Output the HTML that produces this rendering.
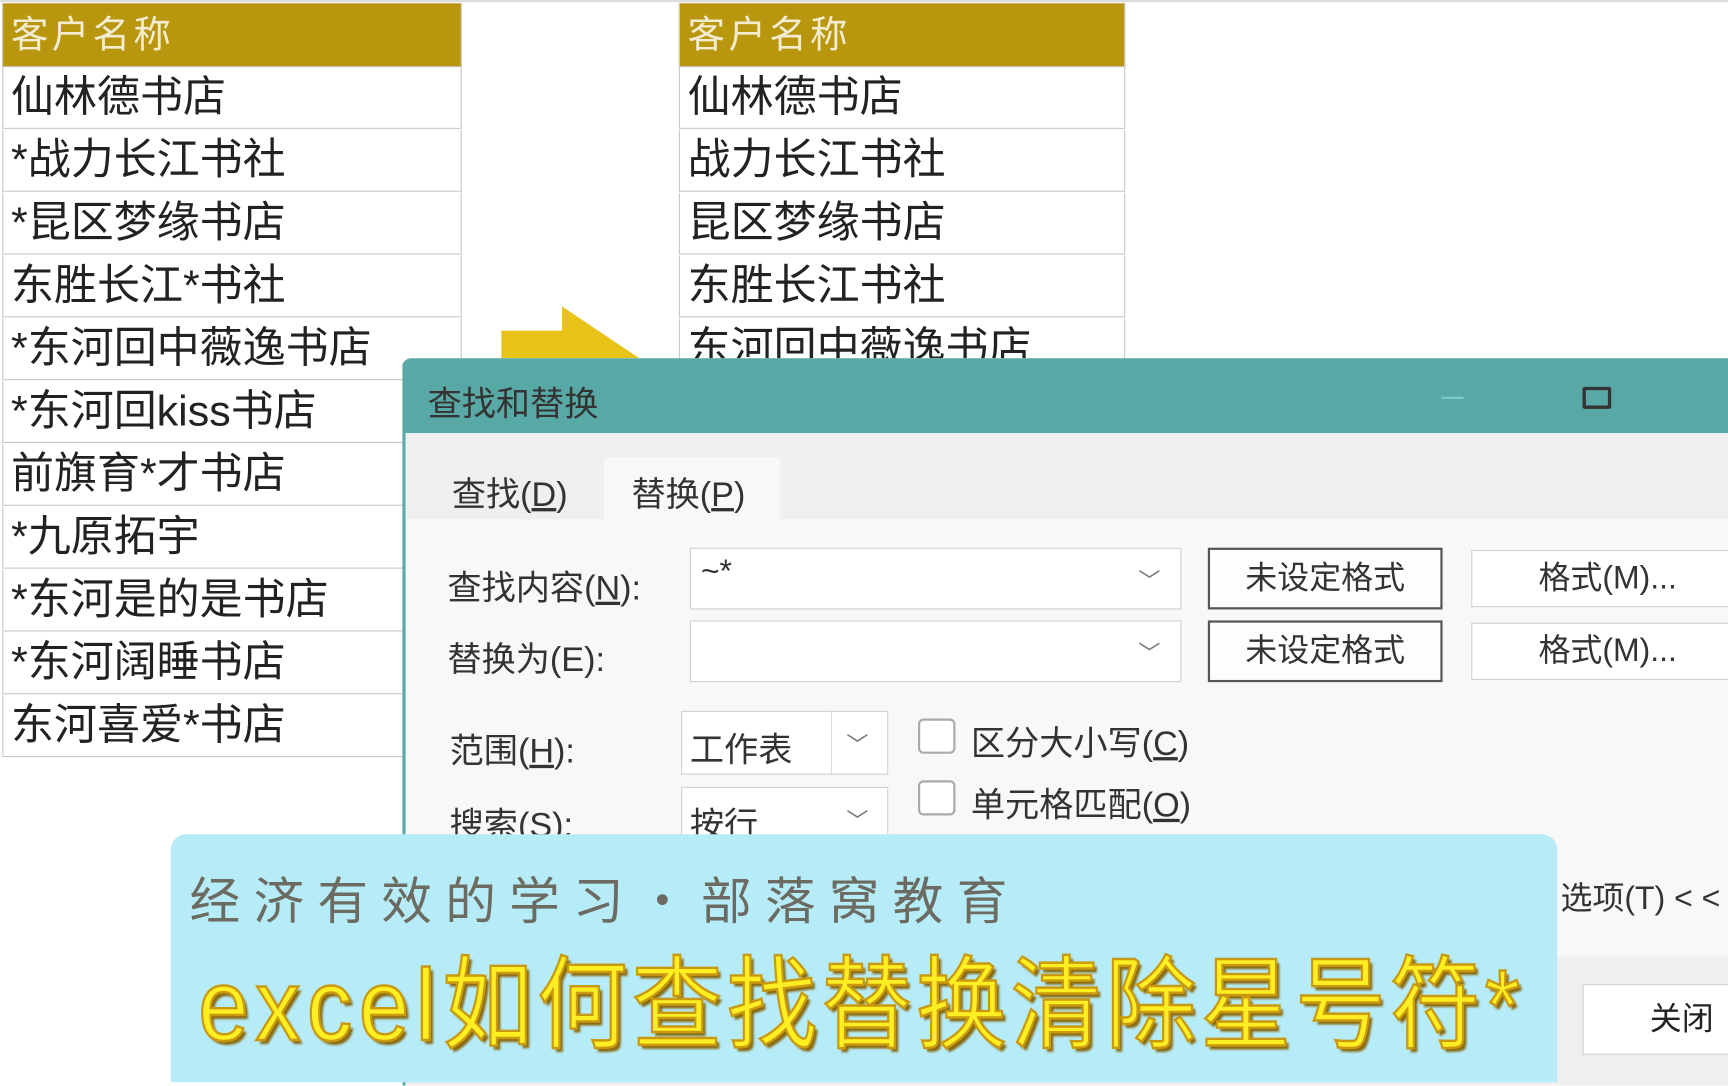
<!DOCTYPE html>
<html><head><meta charset="utf-8"><style>
html,body{margin:0;padding:0;width:1728px;height:1080px;overflow:hidden;background:#fff}
#w{position:absolute;left:0;top:0;width:1568px;height:980px;transform:scale(1.10204);transform-origin:0 0;font-family:"Liberation Sans","Noto Sans CJK SC",sans-serif;color:#222}
.a{position:absolute}
.cell{position:absolute;height:56px;border-bottom:1px solid #c8c8c8;border-right:1px solid #c8c8c8;border-left:1px solid #c8c8c8;font-size:39px;line-height:56px;padding-left:7px;box-sizing:border-box;white-space:nowrap;overflow:hidden;background:#fff;letter-spacing:0px}
.hd{background:#b8970f;color:#f3ecd0;letter-spacing:3px;font-size:34px}
.t{position:absolute;font-size:29px;white-space:nowrap;color:#333}
.box{position:absolute;background:#fff;border:1px solid #d0d0d0;box-sizing:border-box}
.btn{position:absolute;border:2px solid #555;background:#fdfdfd;box-sizing:border-box;font-size:29px;text-align:center;color:#333}
.chev{position:absolute;font-size:20px;color:#777}
</style></head><body><div id="w">
<div class="cell hd" style="left:2px;top:3px;width:417px;height:58px;line-height:58px">客户名称</div>
<div class="cell" style="left:2px;top:61px;width:417px">仙林德书店</div>
<div class="cell" style="left:2px;top:118px;width:417px">*战力长江书社</div>
<div class="cell" style="left:2px;top:175px;width:417px">*昆区梦缘书店</div>
<div class="cell" style="left:2px;top:232px;width:417px">东胜长江*书社</div>
<div class="cell" style="left:2px;top:289px;width:417px">*东河回中薇逸书店</div>
<div class="cell" style="left:2px;top:346px;width:417px">*东河回kiss书店</div>
<div class="cell" style="left:2px;top:403px;width:417px">前旗育*才书店</div>
<div class="cell" style="left:2px;top:460px;width:417px">*九原拓宇</div>
<div class="cell" style="left:2px;top:517px;width:417px">*东河是的是书店</div>
<div class="cell" style="left:2px;top:574px;width:417px">*东河阔睡书店</div>
<div class="cell" style="left:2px;top:631px;width:417px">东河喜爱*书店</div>
<div class="cell hd" style="left:616px;top:3px;width:405px;height:58px;line-height:58px">客户名称</div>
<div class="cell" style="left:616px;top:61px;width:405px">仙林德书店</div>
<div class="cell" style="left:616px;top:118px;width:405px">战力长江书社</div>
<div class="cell" style="left:616px;top:175px;width:405px">昆区梦缘书店</div>
<div class="cell" style="left:616px;top:232px;width:405px">东胜长江书社</div>
<div class="cell" style="left:616px;top:289px;width:405px">东河回中薇逸书店</div>
<svg class="a" style="left:450px;top:270px" width="140" height="70"><polygon points="5,30 60,30 60,8 130,55 5,55" fill="#e8c418"/></svg>
<div class="a" style="left:0;top:0;width:1568px;height:2px;background:#ddd"></div>
<div class="a" style="left:365px;top:325px;width:1210px;height:660px;background:#f8f8f8;border-left:3px solid #58a8a5;border-radius:8px 0 0 0;overflow:hidden">
 <div class="a" style="left:0;top:0;width:1210px;height:68px;background:#58a8a5"></div>
 <div class="t" style="left:20px;top:16px;font-size:31px;color:#333">查找和替换</div>
 <div class="a" style="left:940px;top:35px;width:20px;height:2px;background:#7cc"></div>
 <div class="a" style="left:1068px;top:26px;width:20px;height:14px;border:3px solid #333;border-radius:2px"></div>
 <div class="a" style="left:0;top:68px;width:1210px;height:78px;background:#efefef"></div>
 <div class="a" style="left:180px;top:90px;width:160px;height:58px;background:#f8f8f8"></div>
 <div class="t" style="left:42px;top:98px;font-size:31px">查找(<u>D</u>)</div>
 <div class="t" style="left:205px;top:98px;font-size:31px">替换(<u>P</u>)</div>
 <div class="t" style="left:38px;top:183px;font-size:31px">查找内容(<u>N</u>):</div>
 <div class="t" style="left:38px;top:248px;font-size:31px">替换为(E):</div>
 <div class="box" style="left:258px;top:172px;width:446px;height:56px"></div>
 <div class="t" style="left:268px;top:178px">~*</div>
 <div class="chev" style="left:665px;top:186px">﹀</div>
 <div class="box" style="left:258px;top:238px;width:446px;height:56px"></div>
 <div class="chev" style="left:665px;top:252px">﹀</div>
 <div class="btn" style="left:728px;top:172px;width:213px;height:56px;line-height:52px">未设定格式</div>
 <div class="btn" style="left:728px;top:238px;width:213px;height:56px;line-height:52px">未设定格式</div>
 <div class="box" style="left:967px;top:174px;width:250px;height:52px;font-size:29px;line-height:50px;padding-left:60px;color:#333">格式(M)...</div>
 <div class="box" style="left:967px;top:240px;width:250px;height:52px;font-size:29px;line-height:50px;padding-left:60px;color:#333">格式(M)...</div>
 <div class="t" style="left:40px;top:331px;font-size:31px">范围(<u>H</u>):</div>
 <div class="box" style="left:250px;top:320px;width:188px;height:58px"></div>
 <div class="a" style="left:386px;top:320px;width:1px;height:58px;background:#ddd"></div>
 <div class="t" style="left:258px;top:330px;font-size:31px">工作表</div>
 <div class="chev" style="left:400px;top:335px">﹀</div>
 <div class="t" style="left:40px;top:398px;font-size:31px">搜索(S):</div>
 <div class="box" style="left:250px;top:389px;width:188px;height:58px"></div>
 <div class="t" style="left:258px;top:398px;font-size:31px">按行</div>
 <div class="chev" style="left:400px;top:404px">﹀</div>
 <div class="a" style="left:465px;top:327px;width:30px;height:28px;border:2px solid #aaa;border-radius:5px;background:#fff"></div>
 <div class="t" style="left:513px;top:324px;font-size:31px">区分大小写(<u>C</u>)</div>
 <div class="a" style="left:465px;top:383px;width:30px;height:28px;border:2px solid #aaa;border-radius:5px;background:#fff"></div>
 <div class="t" style="left:513px;top:380px;font-size:31px">单元格匹配(<u>O</u>)</div>
 <div class="t" style="left:1048px;top:467px;font-size:29px">选项(T) &lt; &lt;</div>
 <div class="a" style="left:0;top:543px;width:1210px;height:120px;background:#efefef"></div>
 <div class="box" style="left:1068px;top:568px;width:150px;height:64px;font-size:29px;line-height:62px;padding-left:60px">关闭</div>
</div>
<div class="a" style="left:155px;top:757px;width:1258px;height:225px;background:#b6ecf8;border-radius:14px 14px 0 0"></div>
<div class="a" style="left:172px;top:782px;font-size:46px;letter-spacing:12px;color:#6b6b62;white-space:nowrap">经济有效的学习・部落窝教育</div>
<div class="a" style="left:180px;top:852px;font-size:82px;line-height:110px;white-space:nowrap;color:#ffee22;-webkit-text-stroke:2px #c99a10;text-shadow:3px 3px 2px #8a6a10;transform:scaleY(1.12);transform-origin:0 0"><span style="letter-spacing:6px">excel</span><span style="letter-spacing:4px">如何查找替换清除星号符*</span></div>
</div></body></html>
